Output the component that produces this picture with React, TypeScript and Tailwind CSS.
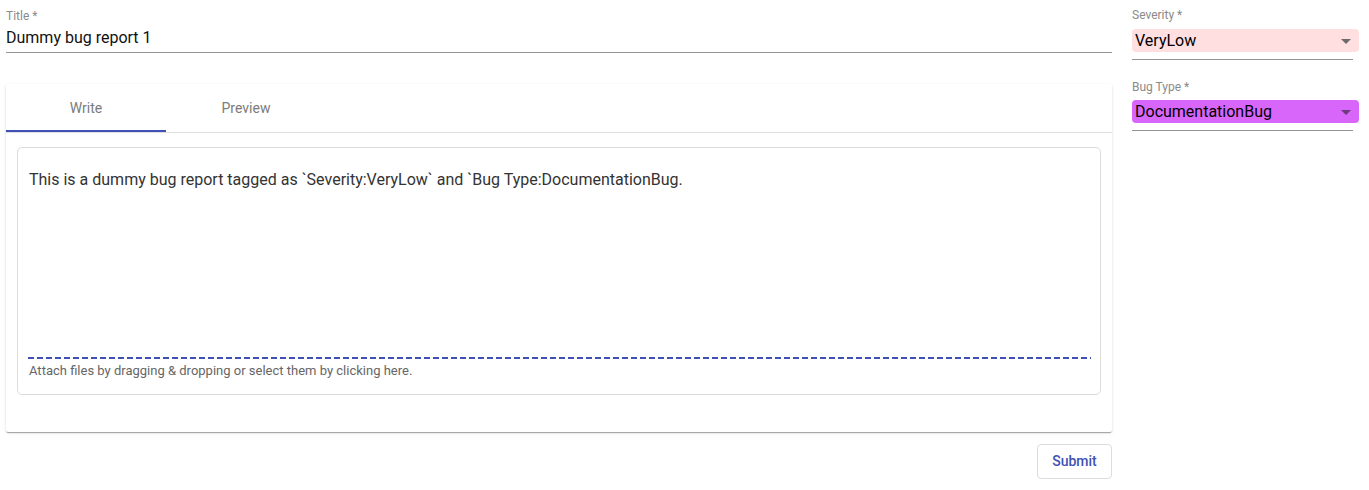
import React from "react";

export default function App() {
  return (
    <div className="w-[1369px] h-[490px] bg-white font-['Roboto',sans-serif] flex gap-[20px] pl-[6px]">
      {/* Left column */}
      <div className="w-[1106px] flex flex-col">
        {/* Title field */}
        <div className="pt-[9px] border-b border-[#949494]">
          <div className="text-[12px] leading-[14px] text-[#8a8a8a]">Title *</div>
          <div className="mt-[5px] pb-[5px] text-[16px] leading-[19px] text-[#111111]">Dummy bug report 1</div>
        </div>

        {/* Card */}
        <div className="mt-[31px] h-[348px] bg-white rounded-[2px] shadow-[0_2px_1px_-1px_rgba(0,0,0,0.2),0_1px_1px_0_rgba(0,0,0,0.14),0_1px_3px_0_rgba(0,0,0,0.12)] flex flex-col">
          <div className="h-[49px] border-b border-[#e0e0e0] flex">
            <div className="w-[160px] h-[48px] relative flex items-center justify-center text-[14px] text-[#7b7b7b]">
              Write
              <div className="absolute left-0 right-0 bottom-[0px] h-[2px] bg-[#3f51b5]" />
            </div>
            <div className="w-[160px] h-[48px] flex items-center justify-center text-[14px] text-[#7b7b7b]">
              Preview
            </div>
          </div>
          <div className="px-[11px] pt-[14px]">
            <div className="h-[248px] border border-[#dcdcdc] rounded-[5px] flex flex-col px-[11px]">
              <div className="pt-[22px] text-[16px] leading-[19px] text-[#333333] flex-1">
                This is a dummy bug report tagged as `Severity:VeryLow` and `Bug Type:DocumentationBug.
              </div>
              <div className="h-[2px] -ml-[1px] -mr-[2px] bg-[repeating-linear-gradient(to_right,#3f51b5_0_6px,transparent_6px_9px)]" />
              <div className="pt-[4px] pb-[16px] text-[13px] leading-[15px] text-[#666666]">
                Attach files by dragging &amp; dropping or select them by clicking here.
              </div>
            </div>
          </div>
        </div>

        {/* Submit */}
        <div className="flex justify-end mt-[12px]">
          <button className="w-[75px] h-[35px] border border-[#dcdcdc] rounded-[4px] text-[14px] font-medium text-[#3f51b5] bg-white">
            Submit
          </button>
        </div>
      </div>

      {/* Right column */}
      <div className="w-[227px] flex flex-col">
        <div className="pt-[8px] text-[12px] leading-[14px] text-[#8a8a8a]">Severity *</div>
        <div className="mt-[7px] w-[227px] h-[23px] bg-[#ffdfe0] rounded-[4px] flex items-start justify-between pl-[3px] pr-[8px]">
          <span className="pt-[2px] text-[16px] leading-[19px] text-black">VeryLow</span>
          <svg width="10" height="5" viewBox="0 0 10 5" className="mt-[10px]">
            <path d="M0 0 L10 0 L5 5 Z" fill="#6b6b6b" />
          </svg>
        </div>
        <div className="mt-[7px] w-[221px] h-[1px] bg-[#949494]" />

        <div className="pt-[20px] text-[12px] leading-[14px] text-[#8a8a8a]">Bug Type *</div>
        <div className="mt-[6px] w-[227px] h-[23px] bg-[#d966fb] rounded-[4px] flex items-start justify-between pl-[3px] pr-[8px]">
          <span className="pt-[2px] text-[16px] leading-[19px] text-black">DocumentationBug</span>
          <svg width="10" height="5" viewBox="0 0 10 5" className="mt-[10px]">
            <path d="M0 0 L10 0 L5 5 Z" fill="#6b3b7b" />
          </svg>
        </div>
        <div className="mt-[7px] w-[221px] h-[1px] bg-[#949494]" />
      </div>
    </div>
  );
}
